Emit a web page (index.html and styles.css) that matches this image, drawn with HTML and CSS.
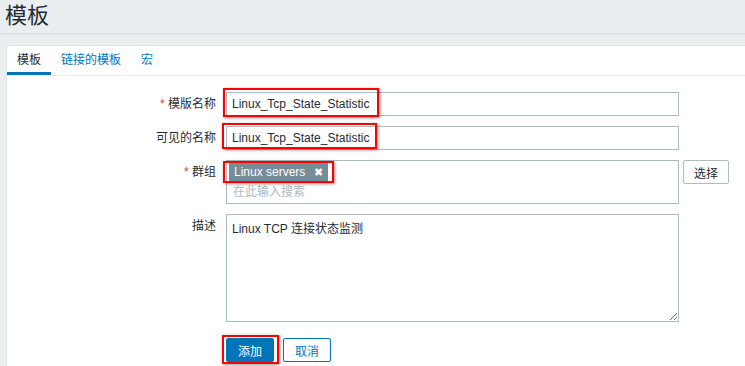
FILE: index.html
```html
<!DOCTYPE html>
<html lang="zh-CN">
<head>
    <meta charset="UTF-8">
    <title>模板</title>
    <link rel="stylesheet" href="styles.css">
</head>
<body>

<header class="page-header">
    <h1>模板</h1>
</header>

<div class="card">
    <ul class="tabs">
        <li class="tab active">模板</li>
        <li class="tab">链接的模板</li>
        <li class="tab">宏</li>
    </ul>

    <form class="form">
        <div class="row">
            <label class="label"><span class="req">*</span> 模版名称</label>
            <div class="field">
                <input class="text-input" type="text" value="Linux_Tcp_State_Statistic">
                <span class="mark mark-name"></span>
            </div>
        </div>

        <div class="row">
            <label class="label">可见的名称</label>
            <div class="field">
                <input class="text-input" type="text" value="Linux_Tcp_State_Statistic">
                <span class="mark mark-visible"></span>
            </div>
        </div>

        <div class="row">
            <label class="label"><span class="req">*</span> 群组</label>
            <div class="field field-group">
                <div class="multiselect">
                    <div class="chips">
                        <span class="chip">Linux servers <span class="chip-x">✖</span></span>
                    </div>
                    <div class="search">在此输入搜索</div>
                </div>
                <button type="button" class="btn-select">选择</button>
                <span class="mark mark-group"></span>
            </div>
        </div>

        <div class="row">
            <label class="label">描述</label>
            <div class="field">
                <textarea class="textarea">Linux TCP 连接状态监测</textarea>
            </div>
        </div>

        <div class="row buttons">
            <div class="label"></div>
            <div class="field">
                <button type="button" class="btn btn-primary">添加</button>
                <button type="button" class="btn btn-alt">取消</button>
                <span class="mark mark-add"></span>
            </div>
        </div>
    </form>
</div>

</body>
</html>
```

FILE: styles.css
```css
body {
    font-family: Arial, "Liberation Sans", "Noto Sans CJK SC", sans-serif;
    font-size: 12px;
    color: #1f2c33;
    margin: 0;
    padding: 0;
    background-color: #ebeef0;
    overflow: hidden;
    height: 366px;
}

.page-header {
    height: 33px;
    border-bottom: 2px solid #dde2e5;
    padding-left: 5px;
}

.page-header h1 {
    margin: 0;
    font-size: 22px;
    font-weight: normal;
    line-height: 32px;
    color: #1f2c33;
}

.card {
    margin: 10px 0 0 6px;
    background-color: #fff;
    border: 1px solid #dfe4e7;
    border-right: none;
    border-bottom: none;
    height: 320px;
    overflow: hidden;
}

.tabs {
    list-style: none;
    margin: 0;
    padding: 0;
    display: flex;
    height: 29px;
    border-bottom: 1px solid #ebeef0;
}

.tab {
    padding: 0 10px;
    line-height: 28px;
    color: #0275b8;
    border-bottom: 3px solid transparent;
}

.tab.active {
    color: #1f2c33;
    border-bottom-color: #0275b8;
}

.form {
    padding-top: 16px;
}

.row {
    display: flex;
    margin-bottom: 10px;
}

.label {
    width: 209px;
    padding-right: 10px;
    text-align: right;
    line-height: 24px;
    flex-shrink: 0;
}

.req {
    color: #e33734;
}

.field {
    position: relative;
    display: flex;
    align-items: flex-start;
}

.text-input {
    width: 453px;
    height: 24px;
    box-sizing: border-box;
    border: 1px solid #acbbc2;
    padding: 0 5px;
    font-family: inherit;
    font-size: 12px;
    color: #1f2c33;
    margin: 0;
}

.multiselect {
    width: 453px;
    height: 44px;
    box-sizing: border-box;
    border: 1px solid #acbbc2;
    padding: 2px 2px 0 2px;
}

.chips {
    height: 19px;
}

.chip {
    display: inline-block;
    background-color: #768d99;
    color: #fff;
    height: 18px;
    line-height: 18px;
    padding: 0 5px 0 5px;
}

.chip-x {
    font-size: 11px;
    margin-left: 5px;
}

.search {
    color: #acbbc2;
    line-height: 20px;
    padding-left: 4px;
}

.btn-select {
    margin-left: 4px;
    height: 24px;
    padding: 0 10px;
    background-color: #fff;
    border: 1px solid #acbbc2;
    border-radius: 2px;
    font-family: inherit;
    font-size: 12px;
    color: #1f2c33;
}

.textarea {
    width: 453px;
    height: 108px;
    box-sizing: border-box;
    border: 1px solid #acbbc2;
    padding: 4px 5px;
    font-family: inherit;
    font-size: 12px;
    color: #1f2c33;
    margin: 0;
    resize: both;
}

.buttons {
    margin-top: 16px;
}

.btn {
    height: 24px;
    padding: 0 11px;
    border-radius: 2px;
    font-family: inherit;
    font-size: 12px;
    margin-right: 9px;
}

.btn-primary {
    background-color: #0275b8;
    border: 1px solid #0275b8;
    color: #fff;
}

.btn-alt {
    background-color: #fff;
    border: 1px solid #0275b8;
    color: #0275b8;
}

/* red annotation boxes drawn over the fields */
.mark {
    position: absolute;
    border: 2px solid #f00;
    box-shadow: 1px 1px 3px rgba(0, 0, 0, 0.45);
    pointer-events: none;
}

.mark-name {
    left: -3px;
    top: -4px;
    width: 152px;
    height: 25px;
}

.mark-visible {
    left: -4px;
    top: -3px;
    width: 151px;
    height: 22px;
}

.mark-group {
    left: -3px;
    top: 1px;
    width: 107px;
    height: 18px;
}

.mark-add {
    left: -4px;
    top: -3px;
    width: 53px;
    height: 25px;
}
```
